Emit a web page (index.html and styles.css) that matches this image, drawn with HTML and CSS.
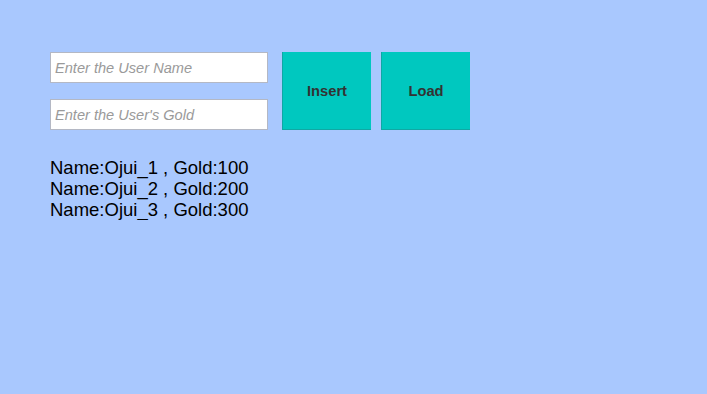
FILE: index.html
```html
<!DOCTYPE html>
<html>
<head>
<meta charset="utf-8">
<link rel="stylesheet" href="styles.css">
</head>
<body>
<div class="page">
  <div class="controls">
    <div class="fields">
      <input class="field" type="text" placeholder="Enter the User Name">
      <input class="field" type="text" placeholder="Enter the User's Gold">
    </div>
    <div class="buttons">
      <button class="btn">Insert</button>
      <button class="btn">Load</button>
    </div>
  </div>
  <div class="list">
    <div class="row">Name:Ojui_1 , Gold:100</div>
    <div class="row">Name:Ojui_2 , Gold:200</div>
    <div class="row">Name:Ojui_3 , Gold:300</div>
  </div>
</div>
</body>
</html>
```
FILE: styles.css
```css
html, body {
  margin: 0;
  padding: 0;
  background: #a9c8fe;
  font-family: "Liberation Sans", Arial, sans-serif;
}
.page {
  padding: 52px 0 0 50px;
}
.controls {
  display: flex;
  align-items: flex-start;
}
.fields {
  display: flex;
  flex-direction: column;
  gap: 16px;
}
.field {
  box-sizing: border-box;
  width: 218px;
  height: 31px;
  margin: 0;
  padding: 1px 4px 0;
  background: #fff;
  border: 1px solid #b4b8c4;
  font-family: "Liberation Sans", Arial, sans-serif;
  font-size: 14.6px;
  color: #333;
  outline: none;
}
.field::placeholder {
  color: #9a9a9a;
  font-style: italic;
}
.buttons {
  display: flex;
  gap: 10px;
  margin-left: 14px;
}
.btn {
  box-sizing: border-box;
  width: 89px;
  height: 78px;
  margin: 0;
  padding: 0;
  background: #00c8bf;
  border: none;
  border-left: 1px solid #10a8a4;
  border-bottom: 1px solid #10a8a4;
  font-family: "Liberation Sans", Arial, sans-serif;
  font-weight: bold;
  font-size: 14.7px;
  color: #333333;
}
.list {
  margin-top: 27px;
}
.row {
  font-size: 18.5px;
  line-height: 21px;
  color: #000;
}
```
